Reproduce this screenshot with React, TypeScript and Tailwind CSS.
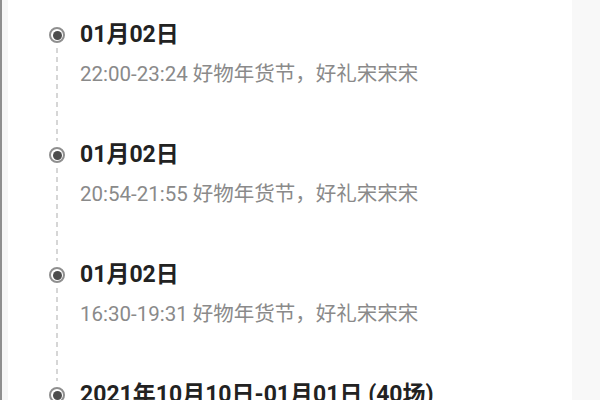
import React from "react";

const items = [
  { title: "01月02日", sub: "22:00-23:24 好物年货节，好礼宋宋宋" },
  { title: "01月02日", sub: "20:54-21:55 好物年货节，好礼宋宋宋" },
  { title: "01月02日", sub: "16:30-19:31 好物年货节，好礼宋宋宋" },
  { title: "2021年10月10日-01月01日 (40场)", sub: "" },
];

export default function App() {
  return (
    <div
      className="flex h-[400px] w-[600px] overflow-hidden bg-white"
      style={{ fontFamily: "Roboto, 'Noto Sans CJK SC', sans-serif" }}
    >
      <div className="w-[2px] shrink-0 bg-[#8e8e8e]" />
      <div className="w-[6px] shrink-0 bg-[#f6f6f6]" />
      <div className="flex-1 bg-white pt-[21px] pl-[40px]">
        {items.map((it, i) => (
          <div key={i} className="flex h-[120px]">
            <div className="flex w-[18px] shrink-0 flex-col items-center">
              <div className="mt-[6px] flex h-[16px] w-[16px] shrink-0 items-center justify-center rounded-full border-2 border-[#8f8f8f] bg-white">
                <div className="h-[9px] w-[9px] shrink-0 rounded-full bg-[#4d4d4d]" />
              </div>
              <div className="mt-[5px] w-[2px] flex-1 bg-[repeating-linear-gradient(to_bottom,#d6d6d6_0_5px,transparent_5px_9px)]" />
            </div>
            <div className="ml-[14px] flex flex-col">
              <div className="h-[28px] whitespace-nowrap text-[23px] font-bold leading-[28px] text-[#222222]">
                {it.title}
              </div>
              {it.sub && (
                <div className="mt-[11px] h-[28px] whitespace-nowrap text-[20.5px] leading-[28px] text-[#8a8a8a]">
                  {it.sub}
                </div>
              )}
            </div>
          </div>
        ))}
      </div>
      <div className="w-[28px] shrink-0 bg-[#f8f8f8]" />
    </div>
  );
}
